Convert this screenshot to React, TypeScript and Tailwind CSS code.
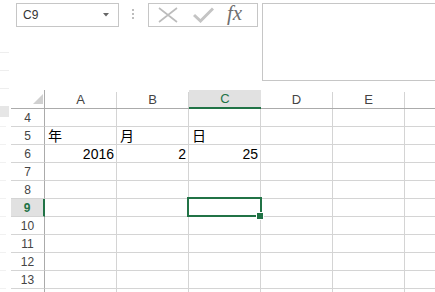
import React from "react";

const GREEN = "#217346";
const cols = ["A", "B", "C", "D", "E", "F"];
const rows = [4, 5, 6, 7, 8, 9, 10, 11, 12, 13, 14];

const data: Record<string, { v: string; right?: boolean }> = {
  "5-A": { v: "年" },
  "5-B": { v: "月" },
  "5-C": { v: "日" },
  "6-A": { v: "2016", right: true },
  "6-B": { v: "2", right: true },
  "6-C": { v: "25", right: true },
};

export default function App() {
  return (
    <div
      className="relative w-[435px] h-[292px] overflow-hidden bg-white text-[#444]"
      style={{ fontFamily: '"Liberation Sans", "Noto Sans CJK JP", sans-serif' }}
    >
      {/* top formula area */}
      <div className="h-[90px] flex items-start pt-[3px]">
        <div className="ml-[16px] w-[103px] h-[24px] border border-[#c6c6c6] flex items-center justify-between pl-[6px] pr-[9px] shrink-0">
          <span className="text-[12px] text-[#333] leading-none">C9</span>
          <svg width="6" height="4" viewBox="0 0 6 4">
            <path d="M0 0 H6 L3 3.5 Z" fill="#666" />
          </svg>
        </div>
        <div className="ml-[13px] mt-[6px] w-[2px] flex flex-col gap-[2px] shrink-0">
          <div className="w-[2px] h-[2px] bg-[#bdbdbd]" />
          <div className="w-[2px] h-[2px] bg-[#bdbdbd]" />
          <div className="w-[2px] h-[2px] bg-[#bdbdbd]" />
        </div>
        <div className="ml-[14px] w-[110px] h-[24px] border border-[#c6c6c6] flex items-center shrink-0">
          <svg className="ml-[9px]" width="20" height="16" viewBox="0 0 20 16">
            <path d="M1 1 L19 15 M19 1 L1 15" stroke="#bcbcbc" strokeWidth="1.6" fill="none" />
          </svg>
          <svg className="ml-[15px]" width="21" height="16" viewBox="0 0 21 16">
            <path d="M1 8 L7.5 14 L20 1.5" stroke="#c4c4c4" strokeWidth="3" fill="none" />
          </svg>
          <span
            className="ml-[13px] text-[21px] italic leading-none text-[#6f6f6f] -mt-[3px]"
            style={{ fontFamily: '"Liberation Serif", serif' }}
          >
            fx
          </span>
        </div>
        <div className="ml-[4px] w-[200px] h-[78px] border border-[#c6c6c6] shrink-0" />
      </div>

      {/* left margin faint marks */}
      <div className="absolute left-0 top-[52px] w-[9px] h-px bg-[#eeeeee]" />
      <div className="absolute left-0 top-[70px] w-[9px] h-px bg-[#eeeeee]" />
      <div className="absolute left-0 top-[88px] w-[9px] h-px bg-[#eeeeee]" />
      <div className="absolute left-0 top-[106px] w-[9px] h-[11px] bg-[#e6e6e6]" />

      {/* header row */}
      <div className="flex h-[19px]">
        <div className="w-[11px] shrink-0" />
        <div className="w-[34px] shrink-0 border-r border-b border-[#ababab] flex items-end justify-end pr-[1px] pb-[4px]">
          <svg width="10" height="10" viewBox="0 0 10 10">
            <path d="M10 0 V10 H0 Z" fill="#d0d0d0" />
          </svg>
        </div>
        {cols.map((c) =>
          c === "C" ? (
            <div
              key={c}
              className="w-[72px] shrink-0 bg-[#e1e1e1] border-b-2 border-[#217346] flex items-center justify-center text-[13px] leading-none"
              style={{ color: GREEN }}
            >
              C
            </div>
          ) : (
            <div key={c} className="w-[72px] shrink-0 border-b border-[#ababab] flex items-end">
              <div className="flex-1 h-[16px] border-r border-[#d4d4d4] flex items-center justify-center text-[13px] leading-none text-[#444] pb-[1px]">
                {c === "F" ? "" : c}
              </div>
            </div>
          )
        )}
      </div>

      {/* data rows */}
      {rows.map((r) => {
        const sel = r === 9;
        return (
          <div key={r} className="flex h-[18px]">
            <div className="w-[11px] shrink-0 flex items-end">
              <div className="w-[6px] h-px bg-[#f1f1f1]" />
            </div>
            <div
              className={
                sel
                  ? "w-[34px] shrink-0 bg-[#e1e1e1] border-r-2 border-r-[#217346] border-b border-b-[#d4d4d4] flex items-center justify-center text-[12px] leading-none font-bold text-[#217346]"
                  : "w-[34px] shrink-0 border-r border-r-[#ababab] border-b border-b-[#d4d4d4] flex items-center justify-center text-[12px] leading-none text-[#444]"
              }
            >
              {r === 14 ? "" : r}
            </div>
            {cols.map((c) => {
              const d = data[`${r}-${c}`];
              return (
                <div
                  key={c}
                  className={
                    "w-[72px] shrink-0 border-r border-b border-[#d4d4d4] flex items-center text-[14px] leading-none text-black " +
                    (d?.right ? "justify-end pr-[2px]" : "justify-start pl-[3px]")
                  }
                >
                  {d ? d.v : ""}
                </div>
              );
            })}
          </div>
        );
      })}

      {/* selection */}
      <div className="absolute left-[187px] top-[197px] w-[75px] h-[20px] border-2 border-[#217346]" />
      <div className="absolute left-[256px] top-[212px] w-[8px] h-[8px] bg-[#217346] border border-white" />
    </div>
  );
}
